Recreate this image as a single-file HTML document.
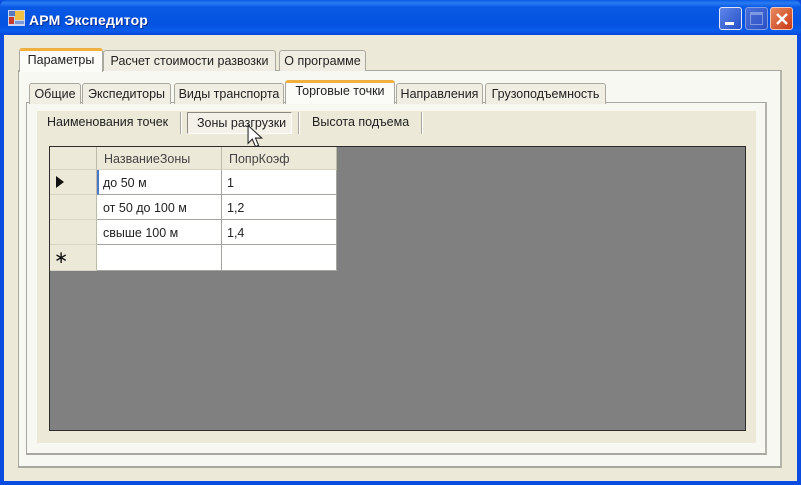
<!DOCTYPE html>
<html><head><meta charset="utf-8"><style>
html,body{margin:0;padding:0;background:#fff}
#w{position:relative;width:801px;height:485px;overflow:hidden;background:#0a4be0;font-family:"Liberation Sans",sans-serif;font-size:12.5px;letter-spacing:0;color:#222}
.a{position:absolute;box-sizing:border-box}
.t{position:absolute;white-space:nowrap;line-height:14px}
.tab{position:absolute;box-sizing:border-box;background:#f0eee2;border:1px solid #a9a99f;border-bottom:none;border-radius:3px 3px 0 0;white-space:nowrap;text-align:center;line-height:20px;height:21px}
.on{background:#fbfbf7;border-color:#a9a99f;border-top:3px solid #f0b040;line-height:16px;z-index:3}
.c{position:absolute;box-sizing:border-box;border-right:1px solid #a5a5a0;border-bottom:1px solid #a5a5a0;background:#fff;padding-left:5px;line-height:26px;white-space:nowrap}
.h{position:absolute;box-sizing:border-box;background:#ece9d8;border-right:1px solid #bdbaa8;border-bottom:1px solid #d8d5c4;white-space:nowrap;padding-left:7px;line-height:24px;color:#444}
.s{position:absolute;width:1px;background:#a8a69a;border-right:1px solid #fff}
</style></head><body><div id="w">
<div class="a" style="left:0;top:0;width:801px;height:35px;background:linear-gradient(#0a5be8 0,#2a7df2 3px,#0a5ae6 7px,#0352e0 24px,#0a5cea 31px,#0448d8 35px);border-radius:7px 7px 0 0"></div>
<svg class="a" style="left:8px;top:10px" width="17" height="16" viewBox="0 0 17 16"><rect width="17" height="16" fill="#c8d4f0"/><rect x="1" y="1" width="6" height="5" fill="#5a7ac0"/><rect x="7" y="1" width="9" height="9" fill="#f2c040"/><rect x="1" y="7" width="5" height="7" fill="#c83a30"/><rect x="7" y="11" width="9" height="3" fill="#7a98d8"/></svg>
<div class="t" style="left:29px;top:11px;color:#fff;font-weight:bold;font-size:14px;letter-spacing:.15px;line-height:18px;text-shadow:1px 1px #0a2c90">АРМ Экспедитор</div>
<div class="a" style="left:719px;top:7px;width:23px;height:23px;border:1px solid #dfe8fb;border-radius:3px;background:linear-gradient(135deg,#5f86e8,#2650c8)"><div class="a" style="left:5px;top:14px;width:9px;height:3px;background:#fff"></div></div>
<div class="a" style="left:745px;top:7px;width:23px;height:23px;border:1px solid #7d9ee6;border-radius:3px;background:linear-gradient(135deg,#4c70d8,#2a50c4)"><div class="a" style="left:4px;top:4px;width:13px;height:13px;border:1px solid #7c9ae4;border-top:3px solid #7c9ae4"></div></div>
<div class="a" style="left:770px;top:7px;width:23px;height:23px;border:1px solid #f0c8b8;border-radius:3px;background:linear-gradient(135deg,#e88a60,#c83a14)"><svg class="a" style="left:4px;top:4px" width="14" height="14" viewBox="0 0 14 14"><path d="M2 2L12 12M12 2L2 12" stroke="#fff" stroke-width="2.4"/></svg></div>

<div class="a" style="left:4px;top:35px;width:793px;height:446px;background:#ece9d8"></div>

<div class="a" style="left:18px;top:70px;width:764px;height:398px;background:#f8f8f2;border:1px solid #a8a89e;border-right:2px solid #b4b4aa;border-bottom:2px solid #a8a89e"></div>
<div class="tab on" style="left:19px;top:48px;width:84px;height:24px;line-height:18px">Параметры</div>
<div class="tab" style="left:103px;top:50px;width:173px">Расчет стоимости развозки</div>
<div class="tab" style="left:279px;top:50px;width:87px">О программе</div>

<div class="a" style="left:26px;top:102px;width:741px;height:353px;background:#f8f8f2;border:1px solid #a8a89e;border-right:2px solid #b4b4aa;border-bottom:2px solid #a8a89e"></div>
<div class="tab" style="left:29px;top:83px;width:52px">Общие</div>
<div class="tab" style="left:82px;top:83px;width:89px">Экспедиторы</div>
<div class="tab" style="left:174px;top:83px;width:110px">Виды транспорта</div>
<div class="tab on" style="left:285px;top:80px;width:110px;height:24px">Торговые точки</div>
<div class="tab" style="left:396px;top:83px;width:87px">Направления</div>
<div class="tab" style="left:485px;top:83px;width:121px">Грузоподъемность</div>

<div class="a" style="left:37px;top:111px;width:719px;height:332px;background:#ece9d8"></div>
<div class="t" style="left:47px;top:115px">Наименования точек</div>
<div class="s" style="left:180px;top:112px;height:22px"></div>
<div class="a" style="left:187px;top:112px;width:105px;height:22px;background:#f4f2e8;border:1px solid #8c8a80;border-right-color:#fff;border-bottom-color:#fff"></div>
<div class="t" style="left:197px;top:116px">Зоны разгрузки</div>
<div class="s" style="left:298px;top:112px;height:22px"></div>
<div class="t" style="left:312px;top:115px">Высота подъема</div>
<div class="s" style="left:421px;top:112px;height:22px"></div>

<div class="a" style="left:49px;top:146px;width:697px;height:285px;background:#808080;border:1px solid #2c2c2c"></div>
<div class="h" style="left:50px;top:147px;width:47px;height:23px"></div>
<div class="h" style="left:97px;top:147px;width:125px;height:23px">НазваниеЗоны</div>
<div class="h" style="left:222px;top:147px;width:115px;height:23px">ПопрКоэф</div>
<div class="h" style="left:50px;top:170px;width:47px;height:25px"></div>
<div class="h" style="left:50px;top:195px;width:47px;height:25px"></div>
<div class="h" style="left:50px;top:220px;width:47px;height:25px"></div>
<div class="h" style="left:50px;top:245px;width:47px;height:26px;padding-left:4px;font-size:17px;line-height:25px;color:#111">∗</div>
<svg class="a" style="left:56px;top:176px" width="8" height="12"><path d="M0 0L8 6L0 12Z" fill="#111"/></svg>
<div class="c" style="left:97px;top:170px;width:125px;height:25px;border-left:2px solid #4a78c8;padding-left:4px">до 50 м</div>
<div class="c" style="left:222px;top:170px;width:115px;height:25px">1</div>
<div class="c" style="left:97px;top:195px;width:125px;height:25px;padding-left:6px">от 50 до 100 м</div>
<div class="c" style="left:222px;top:195px;width:115px;height:25px">1,2</div>
<div class="c" style="left:97px;top:220px;width:125px;height:25px;padding-left:6px">свыше 100 м</div>
<div class="c" style="left:222px;top:220px;width:115px;height:25px">1,4</div>
<div class="c" style="left:97px;top:245px;width:125px;height:26px"></div>
<div class="c" style="left:222px;top:245px;width:115px;height:26px"></div>

<svg class="a" style="left:247px;top:124px;z-index:9" width="19" height="26" viewBox="0 0 18 24"><path d="M1 1V18L5 14L8 21L11 20L8 13H14Z" fill="#fff" stroke="#222" stroke-width="1"/></svg>
</div></body></html>
